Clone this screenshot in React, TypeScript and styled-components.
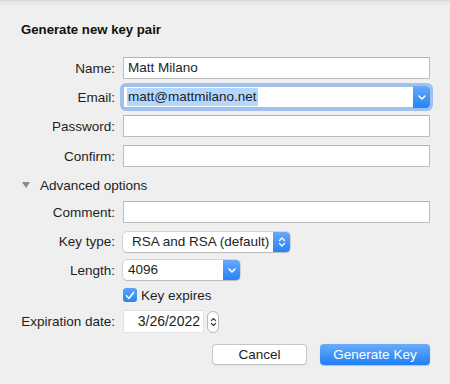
import { FC, ReactNode } from 'react';
import styled, { createGlobalStyle } from 'styled-components';

const GlobalStyle = createGlobalStyle`
  html, body {
    margin: 0;
    padding: 0;
    background: #efefef;
  }
  body {
    font-family: 'Liberation Sans', Arial, sans-serif;
    font-size: 13.5px;
    color: #1e1e1e;
  }
`;

const Sheet = styled.div`
  width: 450px;
  height: 384px;
  box-sizing: border-box;
  background: linear-gradient(#d4d4d4 0px, #e6e6e6 2px, #efefef 6px, #efefef 100%);
  padding: 22px 20px 0 0;
  display: flex;
  flex-direction: column;
`;

const Title = styled.h1`
  margin: 0 0 0 21px;
  font-size: 13.2px;
  line-height: 16px;
  font-weight: 700;
  color: #111;
`;

const Row = styled.div<{ $top: number; $height?: number }>`
  display: grid;
  grid-template-columns: 115px 1fr;
  column-gap: 8px;
  align-items: center;
  margin-top: ${(p) => p.$top}px;
  height: ${(p) => p.$height ?? 22}px;
`;

const Label = styled.label`
  text-align: right;
  white-space: nowrap;
`;

const TextField = styled.div`
  height: 22px;
  box-sizing: border-box;
  border: 1px solid #bebebe;
  border-top-color: #b2b2b2;
  background: #fff;
  padding: 0 4px;
  line-height: 20px;
  white-space: nowrap;
`;

const Combo = styled.div`
  display: flex;
  height: 22px;
  border-radius: 3px;
  box-shadow: 0 0 0 3px rgba(95, 155, 240, 0.55);
`;

const ComboText = styled.div`
  flex: 1;
  box-sizing: border-box;
  background: #fff;
  border: 1px solid #9fbfe8;
  border-right: none;
  padding: 0 3px;
  line-height: 20px;
  display: flex;
  align-items: center;
`;

const Selected = styled.span`
  background: #b3d7ff;
  line-height: 18px;
  padding: 0 1px;
`;

const BlueButton = styled.div`
  width: 17px;
  display: flex;
  align-items: center;
  justify-content: center;
  background: linear-gradient(#67a9f9, #2483f6);
  border-radius: 0 4px 4px 0;
`;

const Popup = styled.div<{ $width: number }>`
  width: ${(p) => p.$width}px;
  height: 20px;
  display: flex;
  border-radius: 4px;
  background: #fff;
  box-shadow: 0 0 0 0.5px rgba(0, 0, 0, 0.22), 0 1px 1px rgba(0, 0, 0, 0.12);
`;

const PopupText = styled.div<{ $pad: number }>`
  flex: 1;
  padding-left: ${(p) => p.$pad}px;
  line-height: 20px;
  white-space: nowrap;
`;

const Disclosure = styled.div`
  display: flex;
  align-items: center;
  gap: 10px;
  padding-left: 22px;
  margin-top: 8px;
  height: 20px;
`;

const Triangle = styled.span`
  width: 0;
  height: 0;
  border-left: 4px solid transparent;
  border-right: 4px solid transparent;
  border-top: 6px solid #8a8a8a;
`;

const CheckWrap = styled.div`
  grid-column: 2;
  display: flex;
  align-items: center;
  gap: 4px;
`;

const CheckBox = styled.span`
  width: 14px;
  height: 14px;
  border-radius: 3px;
  background: linear-gradient(#5aa2f8, #2a85f5);
  display: flex;
  align-items: center;
  justify-content: center;
`;

const DateWrap = styled.div`
  display: flex;
  align-items: center;
  gap: 3px;
`;

const DateField = styled.div`
  width: 81px;
  height: 23px;
  box-sizing: border-box;
  background: #fff;
  border: 1px solid #e2e2e2;
  text-align: right;
  padding-right: 3px;
  line-height: 21px;
  font-size: 14px;
`;

const Stepper = styled.div`
  width: 12px;
  height: 22px;
  box-sizing: border-box;
  border-radius: 6px;
  background: #fff;
  border: 1px solid #b8b8b8;
  display: flex;
  align-items: center;
  justify-content: center;
`;

const Buttons = styled.div`
  display: flex;
  justify-content: flex-end;
  gap: 13px;
  margin-top: 11px;
`;

const PushButton = styled.button<{ $primary?: boolean }>`
  height: 21px;
  box-sizing: border-box;
  border-radius: 4px;
  font-family: inherit;
  font-size: 13.5px;
  padding: 0;
  width: ${(p) => (p.$primary ? 110 : 95)}px;
  color: ${(p) => (p.$primary ? '#fff' : '#1e1e1e')};
  border: ${(p) => (p.$primary ? 'none' : '1px solid #c6c6c6')};
  background: ${(p) => (p.$primary ? 'linear-gradient(#6aacf9, #1f7ff5)' : '#fff')};
  box-shadow: ${(p) => (p.$primary ? '0 0.5px 1px rgba(0,0,0,0.2)' : '0 0.5px 0.5px rgba(0,0,0,0.1)')};
`;

const ChevronDown: FC<{ color?: string }> = ({ color = '#fff' }) => (
  <svg width="8" height="5" viewBox="0 0 8 5">
    <path d="M1 1l3 3 3-3" fill="none" stroke={color} strokeWidth="1.5" strokeLinecap="round" strokeLinejoin="round" />
  </svg>
);

const UpDown: FC<{ color?: string; w?: number; h?: number }> = ({ color = '#fff', w = 8, h = 12 }) => (
  <svg width={w} height={h} viewBox="0 0 8 12">
    <path d="M1.5 4.5L4 2l2.5 2.5M1.5 7.5L4 10l2.5-2.5" fill="none" stroke={color} strokeWidth="1.3" strokeLinecap="round" strokeLinejoin="round" />
  </svg>
);

const Field: FC<{ label: string; top: number; height?: number; children: ReactNode }> = ({ label, top, height, children }) => (
  <Row $top={top} $height={height}>
    <Label>{label}</Label>
    {children}
  </Row>
);

export default function App() {
  return (
    <>
      <GlobalStyle />
      <Sheet>
        <Title>Generate new key pair</Title>
        <Field label="Name:" top={19}>
          <TextField>Matt Milano</TextField>
        </Field>
        <Field label="Email:" top={7}>
          <Combo>
            <ComboText>
              <Selected>matt@mattmilano.net</Selected>
            </ComboText>
            <BlueButton>
              <ChevronDown />
            </BlueButton>
          </Combo>
        </Field>
        <Field label="Password:" top={7}>
          <TextField />
        </Field>
        <Field label="Confirm:" top={8}>
          <TextField />
        </Field>
        <Disclosure>
          <Triangle />
          <span>Advanced options</span>
        </Disclosure>
        <Field label="Comment:" top={6}>
          <TextField />
        </Field>
        <Field label="Key type:" top={8} height={21}>
          <Popup $width={167}>
            <PopupText $pad={9}>RSA and RSA (default)</PopupText>
            <BlueButton>
              <UpDown />
            </BlueButton>
          </Popup>
        </Field>
        <Field label="Length:" top={8} height={20}>
          <Popup $width={117}>
            <PopupText $pad={5}>4096</PopupText>
            <BlueButton>
              <ChevronDown />
            </BlueButton>
          </Popup>
        </Field>
        <Row $top={6} $height={18}>
          <CheckWrap>
            <CheckBox>
              <svg width="10" height="9" viewBox="0 0 10 9">
                <path d="M1.5 4.8l2.4 2.6L8.6 1.4" fill="none" stroke="#fff" strokeWidth="1.6" strokeLinecap="round" strokeLinejoin="round" />
              </svg>
            </CheckBox>
            <span>Key expires</span>
          </CheckWrap>
        </Row>
        <Field label="Expiration date:" top={6} height={23}>
          <DateWrap>
            <DateField>3/26/2022</DateField>
            <Stepper>
              <UpDown color="#333" w={7} h={14} />
            </Stepper>
          </DateWrap>
        </Field>
        <Buttons>
          <PushButton>Cancel</PushButton>
          <PushButton $primary>Generate Key</PushButton>
        </Buttons>
      </Sheet>
    </>
  );
}
